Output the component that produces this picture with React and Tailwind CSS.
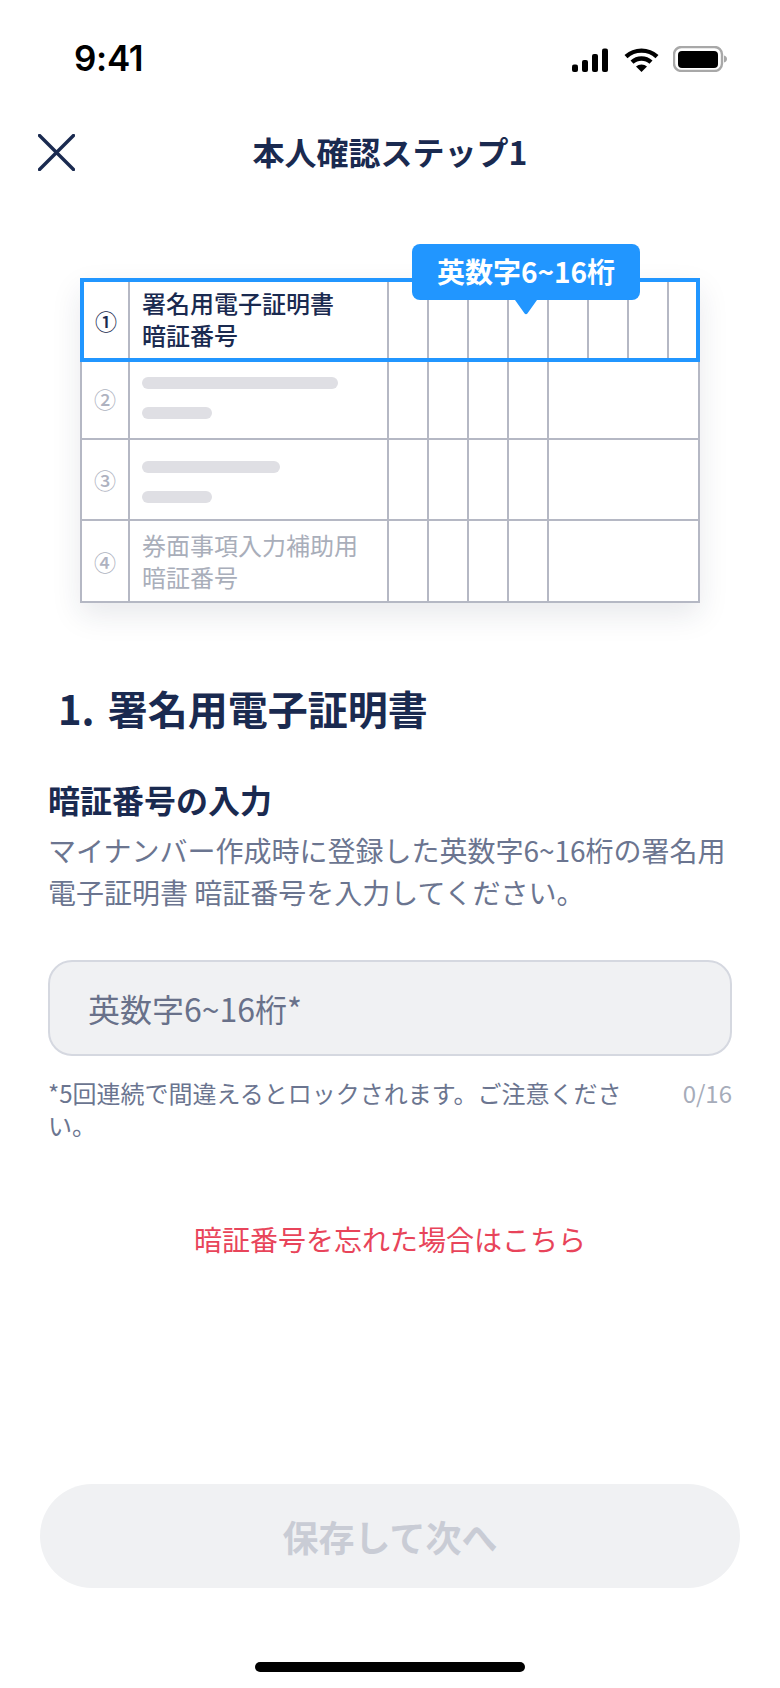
import React from "react";

const jp = "font-['Noto_Sans_CJK_JP','Noto_Sans',sans-serif]";

const StatusBar = () => (
  <div className="h-[116px] pt-[44px] pl-[74px] pr-[53px] flex items-start justify-between">
    <span className="font-['Inter',sans-serif] text-[35px] leading-[28px] font-semibold text-black tracking-[-0.3px]">9:41</span>
    <div className="flex items-end pt-[2px]">
      <svg width="36" height="24" viewBox="0 0 36 24" fill="#000">
        <rect x="0" y="16.5" width="6" height="7.5" rx="2" />
        <rect x="10" y="12" width="6" height="12" rx="2" />
        <rect x="20" y="6" width="6" height="18" rx="2" />
        <rect x="30" y="0.5" width="6" height="23.5" rx="2" />
      </svg>
      <svg className="ml-[16px]" width="35" height="24" viewBox="0 0 35 24" fill="none" stroke="#000" strokeWidth="4.4">
        <path d="M2 8.6C10.8 0.6 24.2 0.6 33 8.6" />
        <path d="M8 14.2C13.4 9.2 21.6 9.2 27 14.2" />
        <path d="M17.5 24L12 18.6C15 15.8 20 15.8 23 18.6Z" fill="#000" stroke="none" />
      </svg>
      <svg className="ml-[14px]" width="54" height="26" viewBox="0 0 54 26" fill="none">
        <rect x="1" y="1" width="48" height="24" rx="7.5" stroke="#a8a8a8" strokeWidth="2.4" />
        <rect x="5" y="5" width="40" height="17" rx="4" fill="#000" />
        <path d="M51 9.5C52.8 10 54 11.2 54 13C54 14.8 52.8 16 51 16.5Z" fill="#a8a8a8" />
      </svg>
    </div>
  </div>
);

const Header = () => (
  <div className="relative h-[72px] flex items-center justify-center">
    <button className="absolute left-[38px] top-[18px]">
      <svg width="37" height="37" viewBox="0 0 37 37" fill="none" stroke="#1a2a50" strokeWidth="3.4" strokeLinecap="round">
        <path d="M1.5 1.5L35.5 35.5M35.5 1.5L1.5 35.5" />
      </svg>
    </button>
    <h1 className="text-[32px] leading-[44px] mb-[2px] font-bold text-[#1a2a50]">本人確認ステップ1</h1>
  </div>
);

const Row = ({ num, numPad, active, height, cellPad, children, boxes }) => (
  <div
    className={`flex ${height} ${
      active ? "border-[4px] border-[#2196ff]" : "border-x-2 border-b-2 border-[#b5b8c4]"
    }`}
  >
    <div
      className={`shrink-0 flex items-center justify-center text-[22px] ${numPad} ${
        active ? "w-[44px] font-medium text-[#1a2a50]" : "w-[46px] font-medium text-[#aeb2c0]"
      }`}
    >
      {num}
    </div>
    <div className={`w-[259px] shrink-0 border-l-2 border-[#b5b8c4] pl-[12px] flex flex-col justify-center ${cellPad}`}>
      {children}
    </div>
    {boxes.map((w, i) => (
      <div key={i} className={`${w} shrink-0 border-l-2 border-[#b5b8c4]`} />
    ))}
    <div className="flex-1 border-l-2 border-[#b5b8c4]" />
  </div>
);

const Bars = ({ width }) => (
  <div>
    <div className={`h-[12px] ${width} rounded-full bg-[#dfdfe4]`} />
    <div className="h-[12px] w-[70px] mt-[18px] rounded-full bg-[#dfdfe4]" />
  </div>
);

const FormTable = () => {
  const four = ["w-[40px]", "w-[40px]", "w-[40px]", "w-[40px]"];
  const seven = [...four, "w-[40px]", "w-[40px]", "w-[40px]"];
  return (
    <div className="relative mx-[80px] mt-[90px] w-[620px] shadow-[0_12px_28px_rgba(30,40,70,0.1)] bg-white">
      <Row num="①" active height="h-[84px]" cellPad="pb-[2px]" boxes={seven}>
        <div className="text-[24px] leading-[32px] font-medium text-[#1a2a50]">
          署名用電子証明書
          <br />
          暗証番号
        </div>
      </Row>
      <Row num="②" numPad="pb-[4px]" height="h-[78px]" cellPad="pb-[4px]" boxes={four}>
        <Bars width="w-[196px]" />
      </Row>
      <Row num="③" height="h-[81px]" cellPad="pt-[4px]" boxes={four}>
        <Bars width="w-[138px]" />
      </Row>
      <Row num="④" height="h-[82px]" boxes={four}>
        <div className="text-[24px] leading-[32px] font-normal text-[#a9aeba]">
          券面事項入力補助用
          <br />
          暗証番号
        </div>
      </Row>

      {/* Tooltip */}
      <div className="absolute left-[332px] top-[-34px] w-[228px] h-[56px] rounded-[8px] bg-[#2196ff] flex items-center justify-center text-[28px] font-bold text-white">
        <span className="mb-[2px]">英数字6~16桁</span>
        <svg className="absolute left-[103px] top-[56px]" width="22" height="15" viewBox="0 0 22 15" fill="#2196ff">
          <path d="M0 0H22L12.4 13.6C11.7 14.6 10.3 14.6 9.6 13.6Z" />
        </svg>
      </div>
    </div>
  );
};

export default function App() {
  return (
    <div className={`relative w-[780px] h-[1688px] bg-white overflow-hidden flex flex-col ${jp}`}>
      <StatusBar />
      <Header />
      <FormTable />

      <h2 className="mt-[77px] mb-[1px] pl-[58px] text-[40px] leading-[56px] font-bold text-[#1a2a50]">
        <span className="mr-[4px]">1.</span> 署名用電子証明書
      </h2>

      <h3 className="mt-[40px] mb-[2px] pl-[48px] text-[32px] leading-[44px] font-bold text-[#1a2a50]">暗証番号の入力</h3>
      <p className="mt-[6px] pl-[48px] w-[740px] text-[28px] leading-[42px] text-[#6b7590]">
        マイナンバー作成時に登録した英数字6~16桁の署名用
        <br />
        電子証明書 暗証番号を入力してください。
      </p>

      <div className="mt-[47px] mx-[48px] h-[96px] rounded-[24px] border-2 border-[#d5d8e0] bg-[#f0f1f3] pl-[38px] flex items-center text-[32px] text-[#69718a]">
        英数字6~16桁*
      </div>

      <div className="mt-[21px] mx-[48px] flex justify-between items-start">
        <p className="w-[582px] text-[24px] leading-[32px] text-[#6b7590]">
          *5回連続で間違えるとロックされます。ご注意ください。
        </p>
        <span className="text-[24px] leading-[32px] text-[#a6acba]">0/16</span>
      </div>

      <a className="mt-[78px] text-center text-[28px] leading-[40px] text-[#e8445a]">暗証番号を忘れた場合はこちら</a>

      <button className="mt-[225px] mx-[40px] h-[104px] rounded-full bg-[#f0f1f3] text-[36px] font-bold text-[#c9ccd5]">
        保存して次へ
      </button>

      <div className="mt-[74px] mx-auto w-[270px] h-[10px] rounded-full bg-black" />
    </div>
  );
}
